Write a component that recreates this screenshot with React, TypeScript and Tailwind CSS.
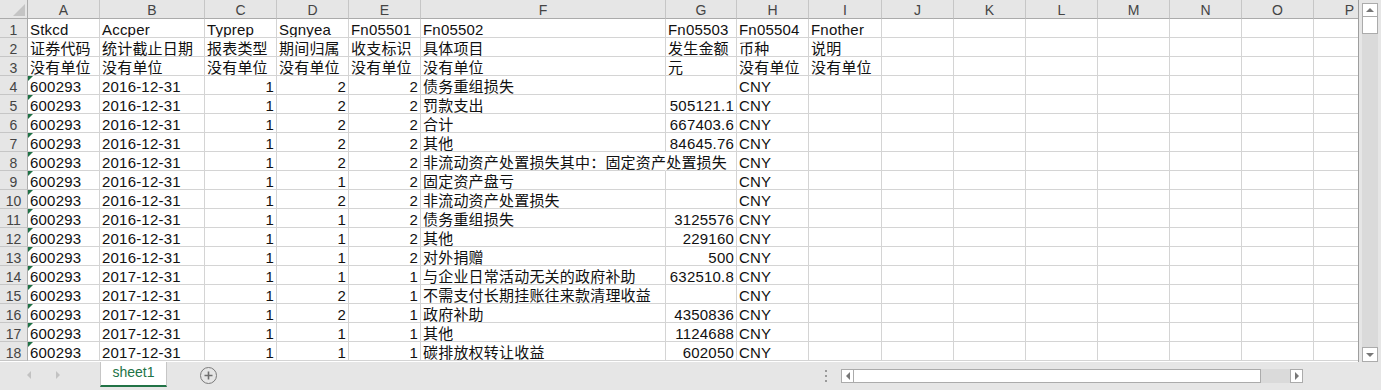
import React from "react";

const LETTERS = ["A", "B", "C", "D", "E", "F", "G", "H", "I", "J", "K", "L", "M", "N", "O", "P"];
const NUMERIC = [2, 3, 4, 6];

const HEAD_ROWS: string[][] = [
  ["Stkcd", "Accper", "Typrep", "Sgnyea", "Fn05501", "Fn05502", "Fn05503", "Fn05504", "Fnother"],
  ["证券代码", "统计截止日期", "报表类型", "期间归属", "收支标识", "具体项目", "发生金额", "币种", "说明"],
  ["没有单位", "没有单位", "没有单位", "没有单位", "没有单位", "没有单位", "元", "没有单位", "没有单位"],
];

const DATA: [string, string, string, string, string, string, string][] = [
  ["2016-12-31", "1", "2", "2", "债务重组损失", ""],
  ["2016-12-31", "1", "2", "2", "罚款支出", "505121.1"],
  ["2016-12-31", "1", "2", "2", "合计", "667403.6"],
  ["2016-12-31", "1", "2", "2", "其他", "84645.76"],
  ["2016-12-31", "1", "2", "2", "非流动资产处置损失其中：固定资产处置损失", ""],
  ["2016-12-31", "1", "1", "2", "固定资产盘亏", ""],
  ["2016-12-31", "1", "2", "2", "非流动资产处置损失", ""],
  ["2016-12-31", "1", "1", "2", "债务重组损失", "3125576"],
  ["2016-12-31", "1", "1", "2", "其他", "229160"],
  ["2016-12-31", "1", "1", "2", "对外捐赠", "500"],
  ["2017-12-31", "1", "1", "1", "与企业日常活动无关的政府补助", "632510.8"],
  ["2017-12-31", "1", "2", "1", "不需支付长期挂账往来款清理收益", ""],
  ["2017-12-31", "1", "2", "1", "政府补助", "4350836"],
  ["2017-12-31", "1", "1", "1", "其他", "1124688"],
  ["2017-12-31", "1", "1", "1", "碳排放权转让收益", "602050"],
].map((r) => ["600293", ...r] as [string, string, string, string, string, string, string]);

function buildRows(): string[][] {
  const rows: string[][] = HEAD_ROWS.map((r) => [...r]);
  for (const d of DATA) rows.push([...d, "CNY", ""]);
  return rows;
}

function Cell({ value, col, row }: { value: string; col: number; row: number }) {
  const right = row > 3 && NUMERIC.includes(col);
  const overflow = row === 8 && col === 5;
  return (
    <div
      className={`relative flex items-center border-b border-r border-[#d4d4d4] px-[2px] leading-[18px] whitespace-nowrap ${
        right ? "justify-end" : ""
      } ${overflow ? "z-10 overflow-visible border-r-transparent" : "overflow-hidden"}`}
    >
      {row > 3 && col === 0 && (
        <span className="absolute left-0 top-0 h-0 w-0 border-r-[5px] border-t-[5px] border-r-transparent border-t-[#1e7145]" />
      )}
      <span className="relative top-[2px] tracking-[0.2px]">{value}</span>
    </div>
  );
}

function Sheet() {
  const rows = buildRows();
  return (
    <div className="relative h-[362px] w-[1359px] overflow-hidden border-r border-[#9e9e9e] bg-white">
      <div className="grid w-max grid-cols-[28px_72px_105px_72px_72px_72px_245px_71px_72px_73px_72px_72px_72px_72px_72px_72px_72px] auto-rows-[19px]">
        <div className="relative border-b border-r border-[#ababab] bg-[#e6e6e6]">
          <span className="absolute bottom-[2px] right-[2px] h-0 w-0 border-b-[12px] border-l-[12px] border-b-[#c4c4c4] border-l-transparent" />
        </div>
        {LETTERS.map((l) => (
          <div
            key={l}
            className="flex items-center justify-center border-b border-r border-b-[#ababab] border-r-[#c6c6c6] bg-[#e6e6e6] text-[14px] text-[#444]"
          >
            <span className="relative top-[1px]">{l}</span>
          </div>
        ))}
        {rows.map((r, ri) => (
          <React.Fragment key={ri}>
            <div className="flex items-center justify-center border-b border-r border-b-[#c6c6c6] border-r-[#ababab] bg-[#e6e6e6] text-[14px] text-[#444]">
              <span className="relative top-[2px]">{ri + 1}</span>
            </div>
            {LETTERS.map((_, ci) => (
              <Cell key={ci} value={r[ci] ?? ""} col={ci} row={ri + 1} />
            ))}
          </React.Fragment>
        ))}
      </div>
    </div>
  );
}

function VScroll() {
  return (
    <div className="flex h-[362px] w-[22px] flex-col bg-[#e6e6e6] px-[3px] pt-[3px]">
      <div className="flex flex-1 flex-col bg-[#dadada]">
        <div className="flex h-[14px] items-center justify-center border border-[#ababab] bg-white">
          <span className="h-0 w-0 border-x-[4px] border-b-[4px] border-x-transparent border-b-[#777]" />
        </div>
        <div className="h-[17px] border border-t-0 border-[#ababab] bg-white" />
        <div className="flex-1" />
        <div className="flex h-[15px] items-center justify-center border border-[#ababab] bg-white">
          <span className="h-0 w-0 border-x-[4px] border-t-[4px] border-x-transparent border-t-[#777]" />
        </div>
      </div>
    </div>
  );
}

function BottomBar() {
  return (
    <div className="flex h-[28px] items-start bg-[#e6e6e6]">
      <div className="flex h-[26px] w-[100px] items-center gap-[25px] pl-[27px]">
        <span className="h-0 w-0 border-y-[4px] border-r-[4px] border-y-transparent border-r-[#c2c2c2]" />
        <span className="h-0 w-0 border-y-[4px] border-l-[4px] border-y-transparent border-l-[#c2c2c2]" />
      </div>
      <div className="flex h-[25px] w-[67px] items-center justify-center border-x border-[#c6c6c6] border-b-2 border-b-[#217346] bg-white pb-[2px] text-[14px] text-[#217346]">
        sheet1
      </div>
      <div className="ml-[33px] mt-[5px] flex h-[17px] w-[17px] items-center justify-center rounded-full border border-[#7a7a7a] text-[#7a7a7a]">
        <svg width="9" height="9" viewBox="0 0 9 9">
          <path d="M4.5 0.5v8M0.5 4.5h8" stroke="#6f6f6f" strokeWidth="1.6" />
        </svg>
      </div>
      <div className="ml-auto mr-[14px] mt-[8px] flex flex-col gap-[3px]">
        <span className="h-[2px] w-[2px] bg-[#9a9a9a]" />
        <span className="h-[2px] w-[2px] bg-[#9a9a9a]" />
        <span className="h-[2px] w-[2px] bg-[#9a9a9a]" />
      </div>
      <div className="mr-[78px] mt-[7px] flex h-[14px] w-[462px] bg-[#dadada]">
        <div className="flex w-[13px] items-center justify-center border border-[#ababab] bg-white">
          <span className="h-0 w-0 border-y-[4px] border-r-[4px] border-y-transparent border-r-[#777]" />
        </div>
        <div className="w-[407px] border-y border-r border-[#ababab] bg-white" />
        <div className="flex-1" />
        <div className="flex w-[13px] items-center justify-center border border-[#ababab] bg-white">
          <span className="h-0 w-0 border-y-[4px] border-l-[4px] border-y-transparent border-l-[#777]" />
        </div>
      </div>
    </div>
  );
}

export default function App() {
  return (
    <div
      className="h-[390px] w-[1381px] overflow-hidden bg-[#e6e6e6] text-[15px] text-[#111]"
      style={{ fontFamily: '"Liberation Sans", "Noto Sans CJK SC", sans-serif' }}
    >
      <div className="flex">
        <Sheet />
        <VScroll />
      </div>
      <BottomBar />
    </div>
  );
}
